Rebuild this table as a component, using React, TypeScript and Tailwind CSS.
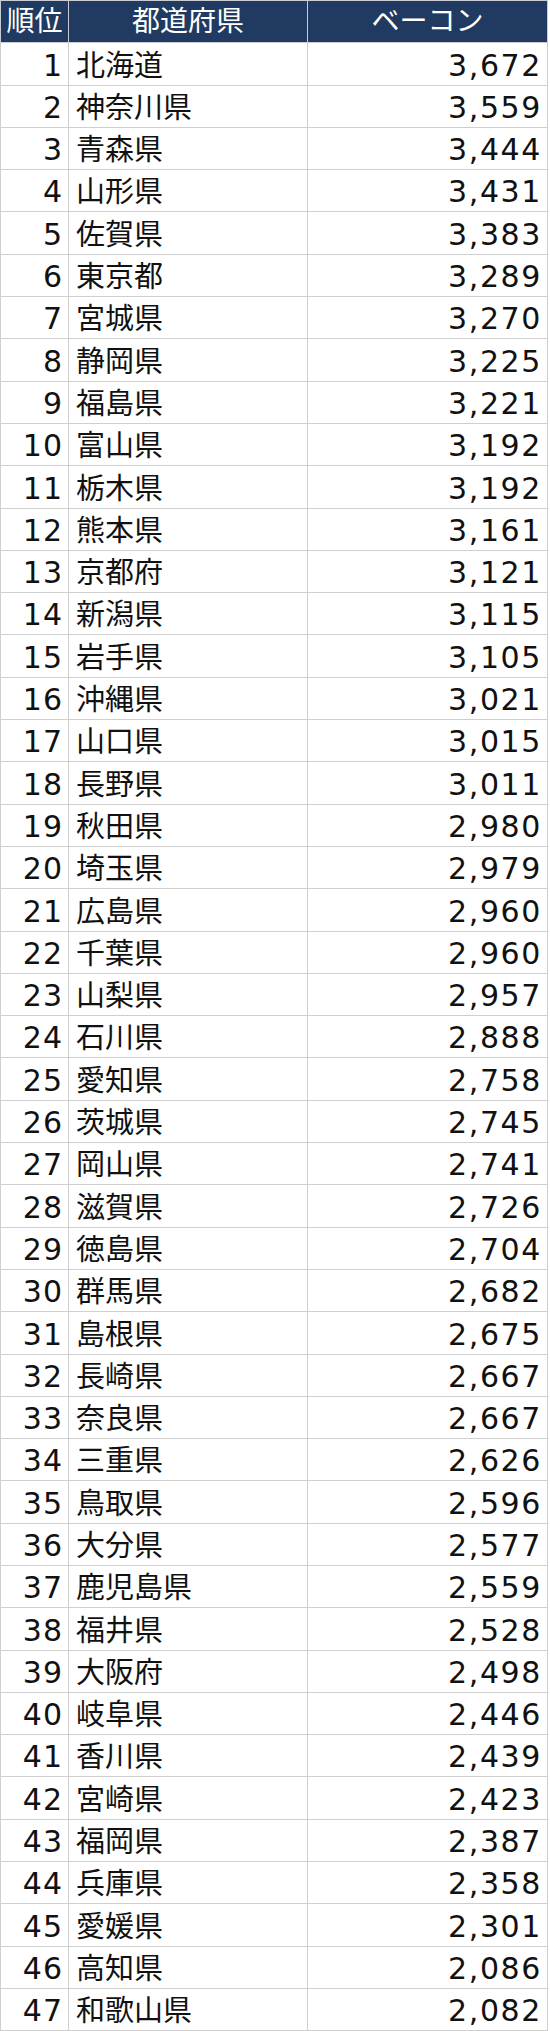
import React from "react";

const data: [string, string][] = [
  ["北海道", "3,672"],
  ["神奈川県", "3,559"],
  ["青森県", "3,444"],
  ["山形県", "3,431"],
  ["佐賀県", "3,383"],
  ["東京都", "3,289"],
  ["宮城県", "3,270"],
  ["静岡県", "3,225"],
  ["福島県", "3,221"],
  ["富山県", "3,192"],
  ["栃木県", "3,192"],
  ["熊本県", "3,161"],
  ["京都府", "3,121"],
  ["新潟県", "3,115"],
  ["岩手県", "3,105"],
  ["沖縄県", "3,021"],
  ["山口県", "3,015"],
  ["長野県", "3,011"],
  ["秋田県", "2,980"],
  ["埼玉県", "2,979"],
  ["広島県", "2,960"],
  ["千葉県", "2,960"],
  ["山梨県", "2,957"],
  ["石川県", "2,888"],
  ["愛知県", "2,758"],
  ["茨城県", "2,745"],
  ["岡山県", "2,741"],
  ["滋賀県", "2,726"],
  ["徳島県", "2,704"],
  ["群馬県", "2,682"],
  ["島根県", "2,675"],
  ["長崎県", "2,667"],
  ["奈良県", "2,667"],
  ["三重県", "2,626"],
  ["鳥取県", "2,596"],
  ["大分県", "2,577"],
  ["鹿児島県", "2,559"],
  ["福井県", "2,528"],
  ["大阪府", "2,498"],
  ["岐阜県", "2,446"],
  ["香川県", "2,439"],
  ["宮崎県", "2,423"],
  ["福岡県", "2,387"],
  ["兵庫県", "2,358"],
  ["愛媛県", "2,301"],
  ["高知県", "2,086"],
  ["和歌山県", "2,082"],
];

export default function App() {
  return (
    <div className="bg-white w-[550px] min-h-[2031px] text-[#111] [font-family:'DejaVu_Sans','Noto_Sans_CJK_JP',sans-serif]">
      <table className="border-collapse w-[547px] table-fixed">
        <colgroup>
          <col className="w-[68px]" />
          <col className="w-[239px]" />
          <col className="w-[240px]" />
        </colgroup>
        <thead>
          <tr className="h-[42.3px] bg-[#203a61] text-white text-[28px] leading-none">
            <th className="border border-[#c9cdd3] font-normal p-0 text-center whitespace-nowrap">順位</th>
            <th className="border border-[#c9cdd3] font-normal p-0 text-center">都道府県</th>
            <th className="border border-[#c9cdd3] font-normal p-0 text-center">ベーコン</th>
          </tr>
        </thead>
        <tbody>
          {data.map(([pref, val], i) => (
            <tr key={pref} className="h-[42.3px] text-[29px] leading-none">
              <td className="border border-[#cfcfcf] p-0 pr-[5px] text-right align-bottom pb-[4px] text-[30px] tracking-[1px] whitespace-nowrap">{i + 1}</td>
              <td className="border border-[#cfcfcf] p-0 pl-[7px] text-left align-bottom pb-[4px]">{pref}</td>
              <td className="border border-[#cfcfcf] p-0 pr-[5px] text-right align-bottom pb-[4px] text-[30px] tracking-[1.6px]">{val}</td>
            </tr>
          ))}
        </tbody>
      </table>
    </div>
  );
}
